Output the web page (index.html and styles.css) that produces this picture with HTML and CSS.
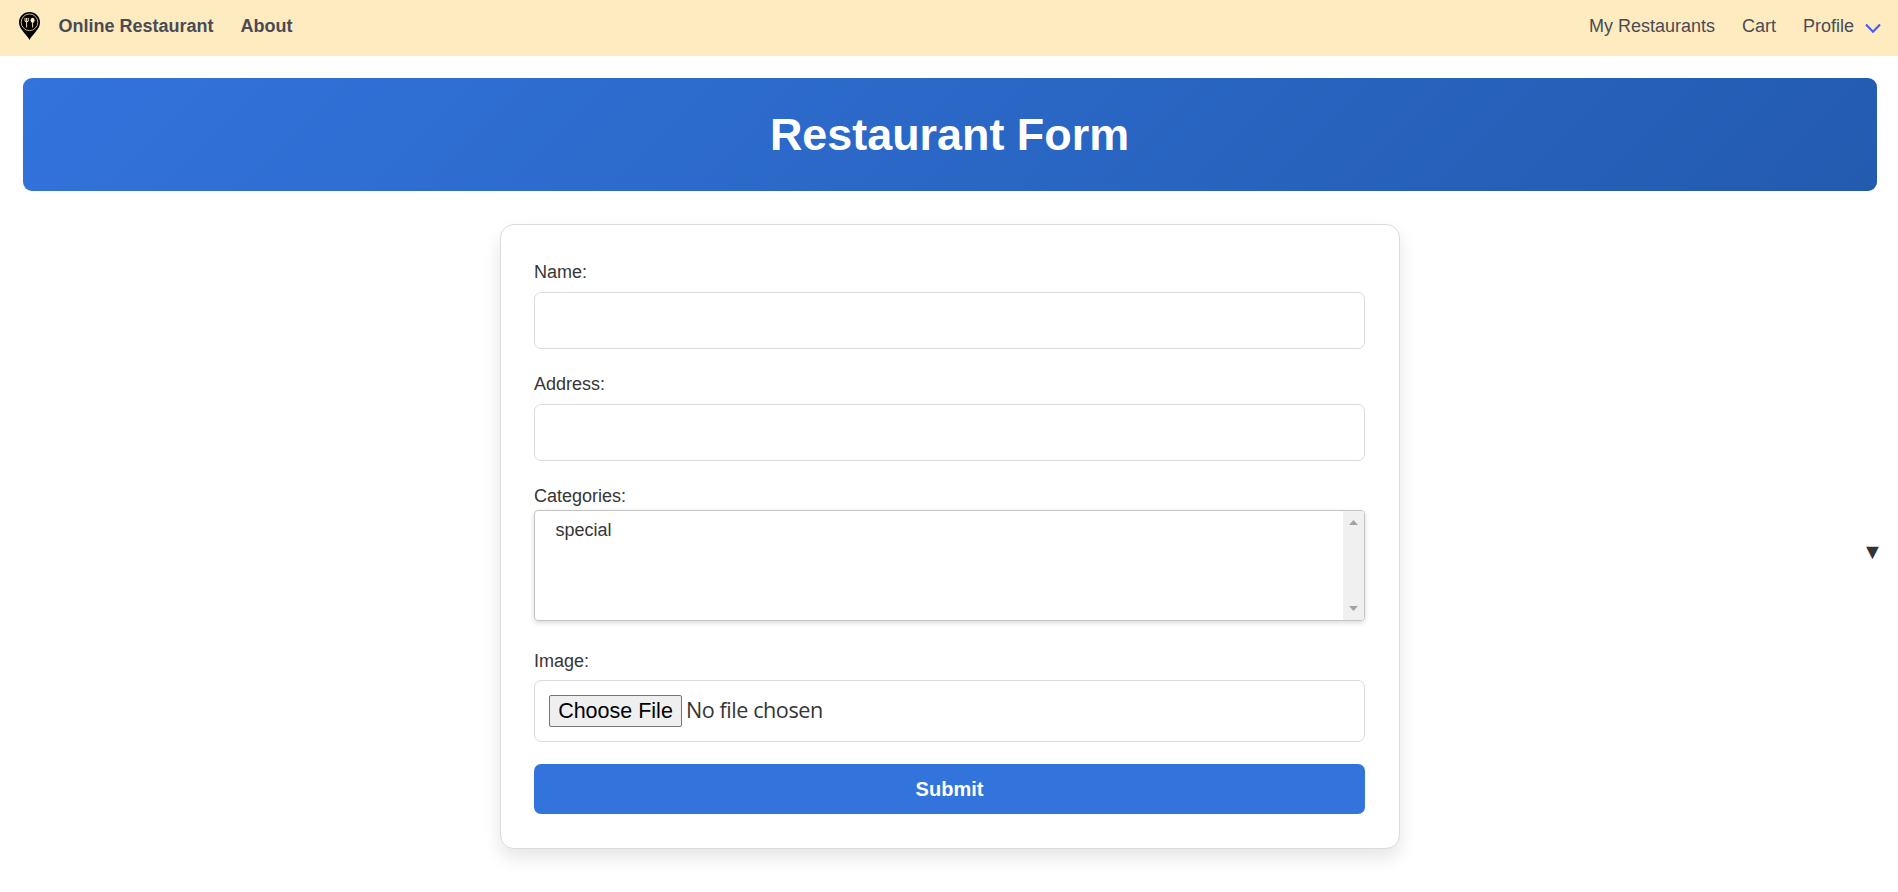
FILE: index.html
```html
<!DOCTYPE html>
<html lang="en">
<head>
<meta charset="utf-8">
<title>Restaurant Form</title>
<link rel="stylesheet" href="styles.css">
</head>
<body>
<nav class="navbar">
  <svg class="logo" viewBox="0 0 21 28"><path d="M10.500 0C4.600 0 0 4.700 0 10.300C0 17.500 7 21.500 10.500 28C14 21.500 21 17.500 21 10.300C21 4.700 16.400 0 10.500 0Z" fill="#000"/><circle cx="10.500" cy="10.300" r="8.300" fill="none" stroke="#d9cba5" stroke-width="0.900"/><path d="M6 6V9.200Q7.600 10.700 9.200 9.200V6M7.600 6V15.500M13.600 9V15.500" fill="none" stroke="#feecc0" stroke-width="0.950"/><ellipse cx="13.600" cy="8.300" rx="2" ry="2.500" fill="#feecc0"/></svg>
  <div class="nav-start"><a class="nav-item">Online Restaurant</a><a class="nav-item">About</a></div>
  <div class="nav-end"><a class="nav-item">My Restaurants</a><a class="nav-item">Cart</a><a class="nav-item">Profile</a></div>
  <svg class="chevron" viewBox="0 0 16 11"><path d="M1 1.500L8 8.700L15 1.500" fill="none" stroke="#485afa" stroke-width="2.200"/></svg>
</nav>
<header class="banner"><h1 class="title">Restaurant Form</h1></header>
<form class="card">
  <label class="label" for="name">Name:</label>
  <input class="input" id="name" type="text">
  <label class="label" for="address">Address:</label>
  <input class="input" id="address" type="text">
  <div class="label">Categories:</div>
  <div class="listbox">
    <div class="option">special</div>
    <div class="scrollbar">
      <svg class="arrow" viewBox="0 0 9 5"><path d="M0 5L4.500 0L9 5Z" fill="#a3a3a3"/></svg>
      <svg class="arrow" viewBox="0 0 9 5"><path d="M0 0L4.500 5L9 0Z" fill="#a3a3a3"/></svg>
    </div>
  </div>
  <div class="label label-image">Image:</div>
  <div class="file"><button class="choose" type="button">Choose File</button><span class="file-name">No file chosen</span></div>
  <button class="submit" type="button">Submit</button>
</form>
<span class="marker">▼</span>
</body>
</html>
```
FILE: styles.css
```css
* { box-sizing: border-box; }
body {
  margin: 0;
  height: 892px;
  overflow: hidden;
  background: #fff;
  color: #363636;
  font: 18px/27px "Liberation Sans", Arial, sans-serif;
}
.navbar {
  display: flex;
  align-items: center;
  height: 56px;
  padding: 0 17px 4px 19px;
  background: #feecc0;
  color: #4a4a55;
}
.logo { width: 21px; height: 28px; margin-right: 18.500px; }
.nav-start, .nav-end { display: flex; gap: 27px; }
.nav-start { font-weight: 700; }
.nav-end { margin-left: auto; }
.chevron { width: 16px; height: 11px; margin: 5px 0 0 11px; }
.banner {
  display: flex;
  align-items: center;
  justify-content: center;
  height: 113px;
  margin: 22px 21px 0 23px;
  border-radius: 9px;
  background: linear-gradient(135deg, #3273dc, #235bb0);
  color: #fff;
}
.title { margin: 0 1px 0 0; font-size: 44.900px; line-height: 56px; }
.card {
  display: flex;
  flex-direction: column;
  width: 900px;
  height: 625px;
  margin: 33px auto 0 500px;
  padding: 34px 34px 0 33px;
  border: 1px solid #dbdbdb;
  border-radius: 14px;
  background: #fff;
  box-shadow: 0 9px 18px rgba(0, 0, 0, 0.1);
}
.label { height: 33px; }
.input {
  width: 100%;
  height: 57px;
  margin-bottom: 22px;
  padding: 0 14px;
  border: 1px solid #dbdbdb;
  border-radius: 7px;
  background: #fff;
}
.listbox {
  display: flex;
  justify-content: space-between;
  height: 111px;
  margin: -6px 0 27px;
  border: 1px solid #c4c4c4;
  border-radius: 4px;
  box-shadow: 0 2px 5px rgba(0, 0, 0, 0.15);
  overflow: hidden;
}
.option { padding: 6px 0 0 20.500px; }
.label-image { height: 32px; }
.scrollbar {
  display: flex;
  flex-direction: column;
  align-items: center;
  justify-content: space-between;
  width: 21px;
  padding: 9px 0;
  background: #f0f0f0;
}
.arrow { width: 9px; height: 5px; }
.file {
  display: flex;
  align-items: center;
  height: 62px;
  padding-left: 14px;
  border: 1px solid #dbdbdb;
  border-radius: 7px;
}
.choose {
  width: 133px;
  height: 32px;
  padding: 0;
  border: 1px solid #767676;
  border-radius: 2px;
  background: #efefef;
  color: #000;
  font: 21.500px/28px "Liberation Sans", Arial, sans-serif;
}
.file-name { margin: -2px 0 0 4px; font: 21.600px/28px "Open Sans", sans-serif; letter-spacing: -0.450px; }
.submit {
  height: 50px;
  margin-top: 22px;
  border: 0;
  border-radius: 7px;
  background: #3273dc;
  color: #fff;
  font: 700 20px/28px "Liberation Sans", Arial, sans-serif;
}
.marker { position: absolute; right: 15px; top: 538px; font-size: 21.600px; line-height: 27px; color: #333; }
```
